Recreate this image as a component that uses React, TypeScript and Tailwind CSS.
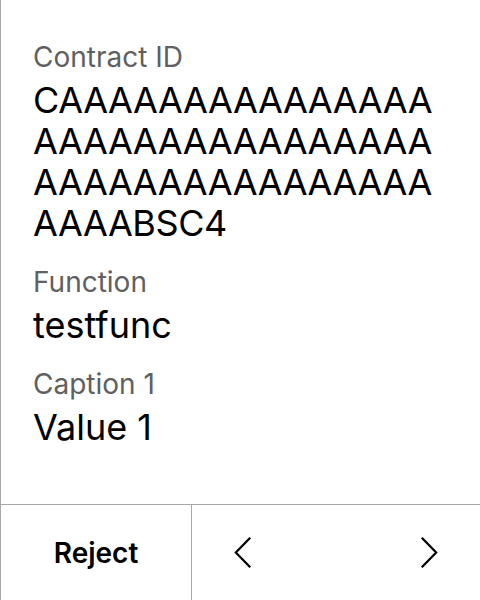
import React from 'react';

// ─── 資料 ──────────────────────────────────────────────────

interface Field {
    caption: string;
    value: string;
    isId?: boolean;
}

const CONTRACT_ID = 'C' + 'A'.repeat(51) + 'BSC4';

const FIELDS: Field[] = [
    { caption: 'Contract ID', value: CONTRACT_ID, isId: true },
    { caption: 'Function', value: 'testfunc' },
    { caption: 'Caption 1', value: 'Value 1' },
];

const FONT = "font-['Inter','Liberation_Sans',sans-serif]";

// ─── 箭頭 ────────────────────────────────────────────────

const Chevron: React.FC<{ dir: 'left' | 'right' }> = ({ dir }) => (
    <svg width="17" height="31" viewBox="0 0 17 31" fill="none" stroke="#000" strokeWidth="2.2" strokeLinecap="square">
        {dir === 'left'
            ? <polyline points="15.5,1.5 1.8,15.5 15.5,29.5" />
            : <polyline points="1.5,1.5 15.2,15.5 1.5,29.5" />}
    </svg>
);

// ─── 主元件 ────────────────────────────────────────────────

const App: React.FC = () => {
    return (
        <div className={`w-[480px] h-[600px] flex flex-col bg-white border-l border-[#a8a8a8] text-black ${FONT}`}>
            {/* 欄位列表 */}
            <div className="flex-1 flex flex-col gap-[21px] pt-[40px] pl-[32px] pr-[32px]">
                {FIELDS.map(f => (
                    <div key={f.caption} className="flex flex-col">
                        <div className="text-[28px] leading-[34px] text-[#606060]">{f.caption}</div>
                        <div
                            className={`mt-[6px] text-[36px] leading-[41px] break-all ${
                                f.isId ? 'tracking-[-0.4px]' : ''
                            }`}
                        >
                            {f.value}
                        </div>
                    </div>
                ))}
            </div>

            {/* 操作列 */}
            <div className="h-[96px] flex border-t border-[#a8a8a8]">
                <button className="w-[191px] flex items-center justify-center text-[28px] font-semibold border-r border-[#a8a8a8]">
                    Reject
                </button>
                <div className="flex-1 flex items-center justify-between px-[42px]">
                    <Chevron dir="left" />
                    <Chevron dir="right" />
                </div>
            </div>
        </div>
    );
};

export default App;
